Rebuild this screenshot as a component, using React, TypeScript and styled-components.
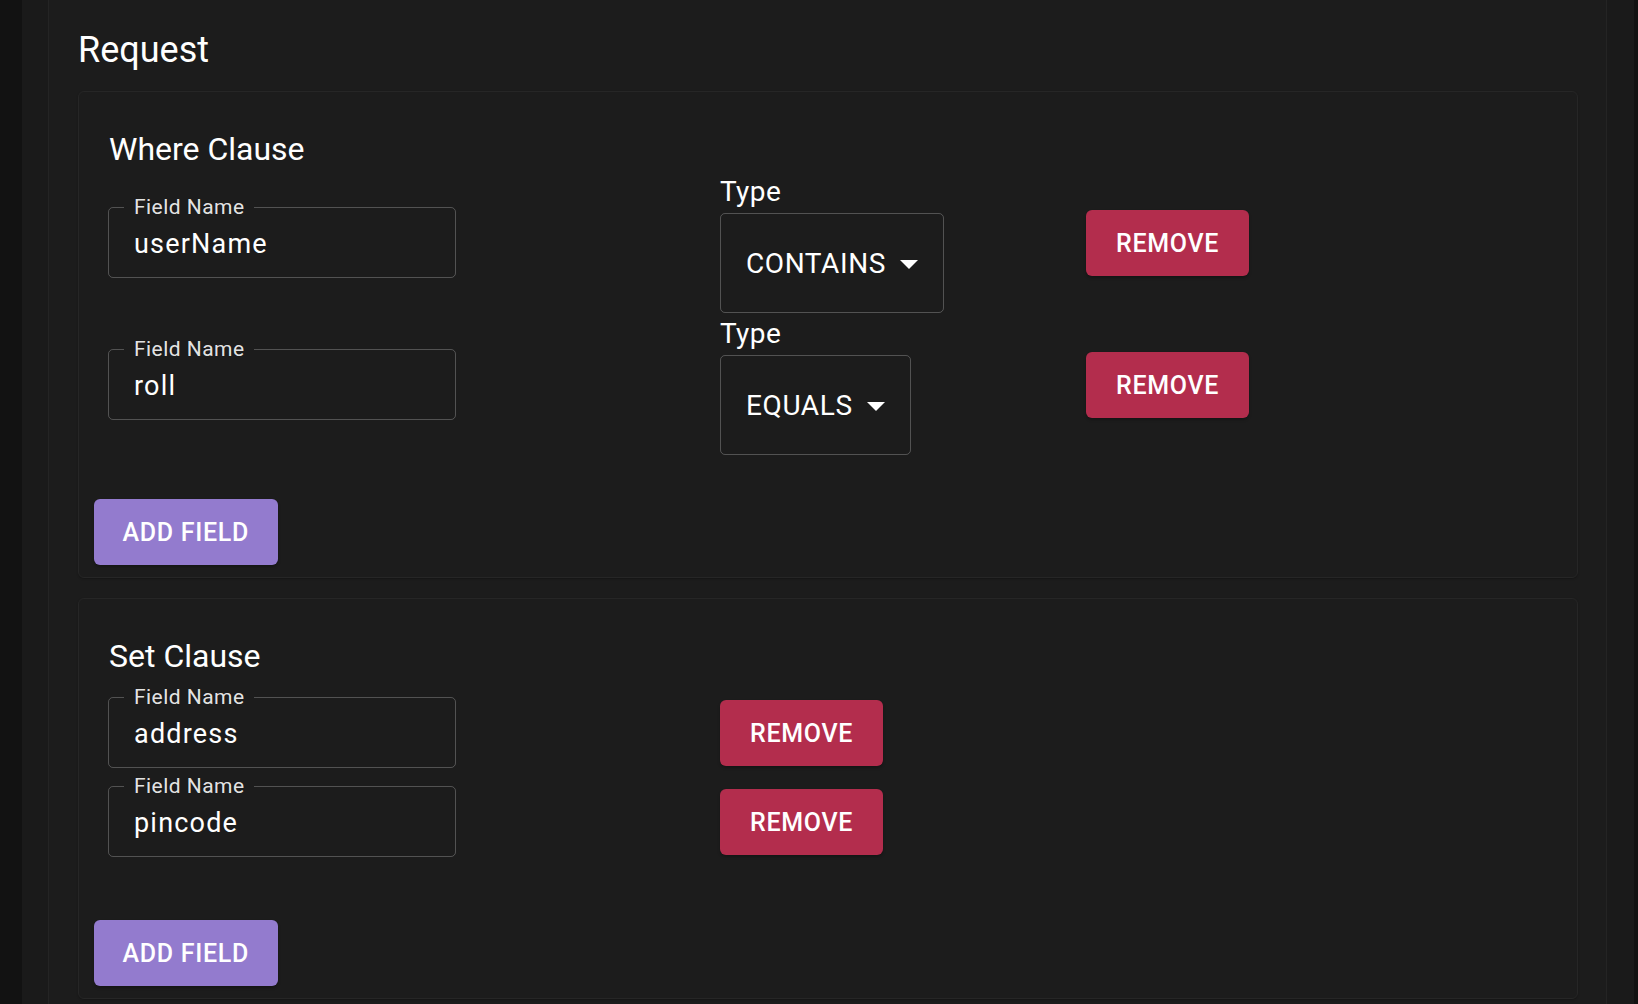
import React from "react";
import styled, { createGlobalStyle } from "styled-components";

const GlobalStyle = createGlobalStyle`
  html, body {
    margin: 0;
    padding: 0;
    height: 100%;
    overflow: hidden;
    background: #121212;
  }
  body {
    font-family: Roboto, "Noto Sans", "Liberation Sans", sans-serif;
    color: #ffffff;
  }
  #root {
    height: 100%;
  }
  * {
    box-sizing: border-box;
  }
`;

const Shell = styled.div`
  height: 100%;
  margin: 0 4px 0 22px;
  background: #1a1a1a;
  display: flex;
`;

const Panel = styled.main`
  flex: 1;
  margin: 0 27px 0 26px;
  border-left: 1px solid #242424;
  border-right: 1px solid #242424;
  background: #1c1c1c;
  padding: 29px 28px 0 29px;
`;

const PageTitle = styled.h1`
  margin: 0 0 20px;
  font-size: 36px;
  line-height: 42px;
  font-weight: 400;
  color: #ffffff;
`;

const Card = styled.section<{ $gap?: number }>`
  margin-top: ${(p) => p.$gap ?? 0}px;
  border: 1px solid #262626;
  border-radius: 6px;
  background: #1c1c1c;
  box-shadow: 0 1px 2px rgba(0, 0, 0, 0.25);
  padding: 37px 16px 12px 15px;
  display: flex;
  flex-direction: column;
  align-items: flex-start;
`;

const CardTitle = styled.h2`
  margin: 0 0 6px 15px;
  font-size: 32px;
  line-height: 40px;
  font-weight: 400;
  color: #ffffff;
`;

const RowList = styled.div<{ $gap: number; $top?: number }>`
  margin: ${(p) => p.$top ?? 0}px 0 0 14px;
  display: flex;
  flex-direction: column;
  gap: ${(p) => p.$gap}px;
`;

const Row = styled.div<{ $cols: string }>`
  display: grid;
  grid-template-columns: ${(p) => p.$cols};
  align-items: start;
`;

const Fieldset = styled.fieldset<{ $top?: number }>`
  margin: ${(p) => p.$top ?? 0}px 0 0;
  width: 348px;
  min-width: 0;
  padding: 0 24px 0 25px;
  border: 1px solid rgba(255, 255, 255, 0.24);
  border-radius: 5px;
`;

const Legend = styled.legend`
  margin-left: -10px;
  padding: 0 10px;
  font-size: 21px;
  line-height: 24px;
  color: rgba(255, 255, 255, 0.9);
  letter-spacing: 0.45px;
`;

const Input = styled.input`
  display: block;
  width: 100%;
  height: 30px;
  margin: 0;
  padding: 10px 0 18px;
  box-sizing: content-box;
  border: none;
  outline: none;
  background: transparent;
  color: #ffffff;
  font-family: Roboto, "Noto Sans", "Liberation Sans", sans-serif;
  font-size: 27px;
  letter-spacing: 1.2px;
`;

const TypeGroup = styled.div`
  display: flex;
  flex-direction: column;
  align-items: flex-start;
  gap: 4px;
`;

const TypeLabel = styled.label`
  font-size: 28px;
  line-height: 34px;
  letter-spacing: 0.4px;
  color: #ffffff;
`;

const Select = styled.div`
  height: 100px;
  display: inline-flex;
  align-items: center;
  gap: 14px;
  padding: 0 25px 0 25px;
  border: 1px solid rgba(255, 255, 255, 0.24);
  border-radius: 5px;
  font-size: 28px;
  letter-spacing: 0.6px;
  color: #ffffff;
  cursor: pointer;
`;

const Caret = styled.svg`
  flex: none;
  width: 18px;
  height: 9px;
  margin-top: 2px;
`;

const Button = styled.button<{ $tone: "danger" | "primary"; $top?: number }>`
  margin: ${(p) => p.$top ?? 0}px 0 0;
  height: 66px;
  padding: 0 ${(p) => (p.$tone === "danger" ? "30px" : "28.5px")};
  border: none;
  border-radius: 6px;
  background: ${(p) => (p.$tone === "danger" ? "#b32d4d" : "#937bce")};
  color: #ffffff;
  font-family: Roboto, "Noto Sans", "Liberation Sans", sans-serif;
  font-size: 25px;
  font-weight: 500;
  letter-spacing: 0.7px;
  text-transform: uppercase;
  cursor: pointer;
  justify-self: start;
  box-shadow: 0 2px 3px rgba(0, 0, 0, 0.25);
`;

const TextField = ({ label, value, top }: { label: string; value: string; top?: number }) => (
  <Fieldset $top={top}>
    <Legend>{label}</Legend>
    <Input value={value} readOnly />
  </Fieldset>
);

const TypeSelect = ({ value }: { value: string }) => (
  <TypeGroup>
    <TypeLabel>Type</TypeLabel>
    <Select>
      <span>{value}</span>
      <Caret viewBox="0 0 18 9">
        <path d="M0 0 L18 0 L9 9 Z" fill="#ffffff" />
      </Caret>
    </Select>
  </TypeGroup>
);

const whereRows = [
  { field: "userName", type: "CONTAINS" },
  { field: "roll", type: "EQUALS" },
];

const setRows = ["address", "pincode"];

export default function App() {
  return (
    <>
      <GlobalStyle />
      <Shell>
        <Panel>
          <PageTitle>Request</PageTitle>

          <Card>
            <CardTitle>Where Clause</CardTitle>
            <RowList $gap={4}>
              {whereRows.map((r) => (
                <Row key={r.field} $cols="612px 366px auto">
                  <TextField label="Field Name" value={r.field} top={20} />
                  <TypeSelect value={r.type} />
                  <Button $tone="danger" $top={35}>
                    Remove
                  </Button>
                </Row>
              ))}
            </RowList>
            <Button $tone="primary" $top={44}>
              Add Field
            </Button>
          </Card>

          <Card $gap={20}>
            <CardTitle>Set Clause</CardTitle>
            <RowList $gap={6} $top={3}>
              {setRows.map((f) => (
                <Row key={f} $cols="612px auto">
                  <TextField label="Field Name" value={f} />
                  <Button $tone="danger" $top={15}>
                    Remove
                  </Button>
                </Row>
              ))}
            </RowList>
            <Button $tone="primary" $top={63}>
              Add Field
            </Button>
          </Card>
        </Panel>
      </Shell>
    </>
  );
}
